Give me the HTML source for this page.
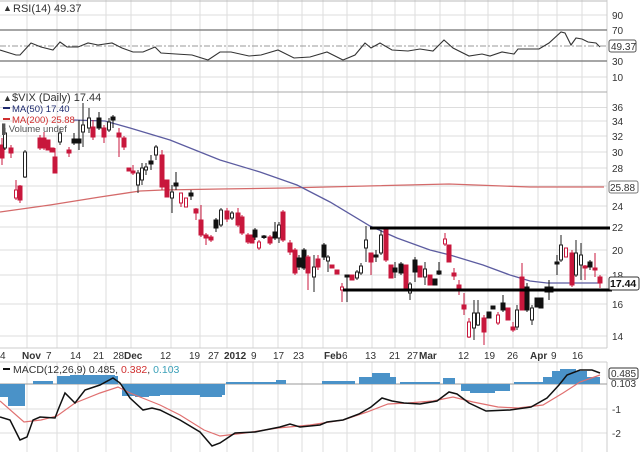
<!DOCTYPE html>
<html><head><meta charset="utf-8"><style>
html,body{margin:0;padding:0;background:#fff;}
svg{display:block;font-family:"Liberation Sans",sans-serif;}
.g{stroke:#ddd;stroke-width:1}
.r{fill:#c8173c;stroke:#c8173c}
.k{fill:#111;stroke:#111}
.w{fill:#fff;stroke:#222}
.p{fill:#fff;stroke:#c8173c}
.wk{stroke-width:1}
.lb{font-size:10px;fill:#333}
</style></head><body>
<svg width="640" height="454" viewBox="0 0 640 454" xmlns="http://www.w3.org/2000/svg">
<rect width="640" height="454" fill="#fff"/>
<g class="g">
<path d="M27 0V348M57 0V348M78 0V348M106 0V348M131 0V348M171 0V348M200 0V348M227 0V348M253 0V348M278 0V348M302 0V348M323 0V348M347 0V348M372 0V348M395 0V348M415 0V348M440 0V348M465 0V348M488 0V348M513 0V348M538 0V348M557 0V348M582 0V348"/>
<path d="M27 362V452M57 362V452M78 362V452M106 362V452M131 362V452M171 362V452M200 362V452M227 362V452M253 362V452M278 362V452M302 362V452M323 362V452M347 362V452M372 362V452M395 362V452M415 362V452M440 362V452M465 362V452M488 362V452M513 362V452M538 362V452M557 362V452M582 362V452"/>
<path d="M0 15H607M0 77H607"/>
<path d="M0 107.5H607M0 121H607M0 136H607M0 152H607M0 168H607M0 186H607M0 206H607M0 227H607M0 250H607M0 275H607M0 304H607M0 336H607"/>
<path d="M0 409H607M0 433H607"/>
</g>
<path d="M0 1H607" stroke="#bbb"/>
<path d="M607 0V348M607 362V452" stroke="#ccc"/>
<path d="M0 30H607M0 61H607" stroke="#888" stroke-width="1.5"/>
<path d="M0 46H607" stroke="#999" stroke-dasharray="6,2,2,2"/>
<path d="M0 92H607" stroke="#aaa"/>
<path d="M0 348H607M0 362H607" stroke="#ccc"/>
<polyline fill="none" stroke="#333" stroke-width="1.1" points="0,50 16,55 20,55 31,43 41,47 53,50 60,42 67,47 78,47 88,43 98,45 112,43 122,48 133,52 143,52 155,47 161,53 176,54 192,55 208,60 220,52 231,52 249,56 261,55 278,50 294,58 310,57 327,52 343,60 355,55 365,43 371,48 380,43 392,50 408,51 420,49 433,51 444,40 453,48 469,56 482,54 490,56 502,52 514,54 518,49 539,49 549,43 561,32 565,33 571,45 576,38 582,39 588,42 596,43 600,47"/>
<text x="3" y="11" style="font-size:9px" fill="#333">&#9650;</text>
<text x="13" y="12" class="lb" style="font-size:11px">RSI(14) 49.37</text>
<text x="612" y="19" class="lb">90</text><text x="612" y="34" class="lb">70</text><text x="612" y="65" class="lb">30</text><text x="612" y="81" class="lb">10</text>
<rect x="609" y="40" width="27" height="12" rx="2" fill="#fff" stroke="#555"/><text x="611" y="50" class="lb">49.37</text>
<polyline fill="none" stroke="#d46a6a" stroke-width="1.3" points="0,212 50,205 100,197 140,191 163,190 220,189 286,188 367,186 449,184 530,187 604,187"/>
<polyline fill="none" stroke="#5c5ca0" stroke-width="1.3" points="73,120 105,121 130,128 170,140 220,160 260,172 297,185 330,202 370,226 397,238 430,250 450,255 483,265 510,275 530,281 547,283 600,283"/>
<g class="wk">
<path class="r" d="M2 138V165"/><rect class="r" x="0" y="145" width="4" height="13"/>
<path class="w" d="M5 128V150"/><rect class="w" x="3.5" y="133" width="3" height="15"/>
<path class="r" d="M11 145V158"/><rect class="r" x="9" y="148" width="4" height="5"/>
<path class="p" d="M16 180V200"/><rect class="p" x="14.5" y="190" width="3" height="8"/>
<path class="r" d="M20 185V203"/><rect class="r" x="18" y="186" width="4" height="14"/>
<path class="w" d="M25 150V178"/><rect class="w" x="23.5" y="152" width="3" height="25"/>
<path class="r" d="M40 135V150"/><rect class="r" x="38" y="138" width="4" height="10"/>
<path class="r" d="M44 132V150"/><rect class="r" x="42" y="138" width="4" height="10"/>
<rect class="r" x="46" y="140" width="4" height="10"/>
<rect class="r" x="50" y="148" width="4" height="4"/>
<path class="r" d="M55 148V173"/><rect class="r" x="53" y="157" width="4" height="16"/>
<path class="w" d="M60 128V145"/><rect class="w" x="58.5" y="133" width="3" height="9"/>
<path class="r" d="M69 147V157"/><rect class="r" x="67" y="150" width="4" height="3"/>
<path class="k" d="M74 133V145"/><rect class="k" x="72" y="139" width="4" height="4"/>
<path class="k" d="M79 120V150"/><rect class="k" x="77" y="139" width="4" height="4"/>
<path class="w" d="M83 103V147"/><rect class="w" x="81.5" y="125" width="3" height="7"/>
<path class="w" d="M89 108V133"/><rect class="w" x="87.5" y="118" width="3" height="10"/>
<path class="r" d="M93 120V140"/><rect class="r" x="91" y="127" width="4" height="10"/>
<path class="k" d="M99 112V130"/><rect class="k" x="97" y="118" width="4" height="10"/>
<path class="r" d="M104 125V143"/><rect class="r" x="102" y="128" width="4" height="9"/>
<path class="w" d="M109 118V132"/><rect class="w" x="107.5" y="122" width="3" height="8"/>
<path class="k" d="M113 115V128"/><rect class="k" x="111" y="117" width="4" height="3"/>
<path class="r" d="M119 128V157"/><rect class="r" x="117" y="133" width="4" height="4"/>
<path class="r" d="M124 136V150"/><rect class="r" x="122" y="138" width="4" height="9"/>
<rect class="r" x="127" y="168" width="4" height="3"/>
<path class="r" d="M133 165V175"/><rect class="r" x="131" y="171" width="4" height="2"/>
<path class="w" d="M138 170V193"/><rect class="w" x="136.5" y="173" width="3" height="12"/>
<path class="w" d="M142 163V185"/><rect class="w" x="140.5" y="168" width="3" height="12"/>
<path class="w" d="M146 163V175"/><rect class="w" x="144.5" y="167" width="3" height="3"/>
<path class="k" d="M151 155V170"/><rect class="k" x="149" y="161" width="4" height="3"/>
<path class="w" d="M156 145V160"/><rect class="w" x="154.5" y="147" width="3" height="8"/>
<path class="r" d="M162 150V190"/><rect class="r" x="160" y="155" width="4" height="32"/>
<rect class="r" x="165" y="180" width="4" height="17"/>
<path class="w" d="M172 185V213"/><rect class="w" x="170.5" y="192" width="3" height="6"/>
<path class="k" d="M176 172V190"/><rect class="k" x="174" y="183" width="4" height="3"/>
<path class="p" d="M181 193V207"/><rect class="p" x="179.5" y="193" width="3" height="10"/>
<rect class="p" x="184.5" y="198" width="3" height="9"/>
<path class="k" d="M191 190V200"/><rect class="k" x="189" y="193" width="4" height="3"/>
<path class="r" d="M196 208V220"/><rect class="r" x="194" y="209" width="4" height="4"/>
<path class="r" d="M201 205V237"/><rect class="r" x="199" y="220" width="4" height="15"/>
<path class="r" d="M206 233V245"/><rect class="r" x="204" y="235" width="4" height="3"/>
<path class="r" d="M211 235V242"/><rect class="r" x="209" y="237" width="4" height="3"/>
<path class="k" d="M216 218V232"/><rect class="k" x="214" y="220" width="4" height="8"/>
<path class="w" d="M221 208V227"/><rect class="w" x="219.5" y="210" width="3" height="15"/>
<path class="r" d="M227 208V222"/><rect class="r" x="225" y="211" width="4" height="8"/>
<path class="w" d="M232 211V220"/><rect class="w" x="230.5" y="213" width="3" height="5"/>
<path class="r" d="M238 208V227"/><rect class="r" x="236" y="213" width="4" height="12"/>
<path class="r" d="M242 215V235"/><rect class="r" x="240" y="217" width="4" height="16"/>
<path class="r" d="M248 233V244"/><rect class="r" x="246" y="235" width="4" height="7"/>
<rect class="r" x="250" y="235" width="4" height="8"/>
<path class="k" d="M255 228V240"/><rect class="k" x="253" y="230" width="4" height="7"/>
<path class="p" d="M259 240V250"/><rect class="p" x="257.5" y="242" width="3" height="6"/>
<path class="k" d="M264 235V239"/><rect class="k" x="262" y="236" width="4" height="1.5"/>
<path class="r" d="M270 235V245"/><rect class="r" x="268" y="237" width="4" height="6"/>
<path class="k" d="M275 222V240"/><rect class="k" x="273" y="232" width="4" height="6"/>
<path class="w" d="M279 222V243"/><rect class="w" x="277.5" y="225" width="3" height="13"/>
<path class="r" d="M283 210V242"/><rect class="r" x="281" y="212" width="4" height="28"/>
<path class="r" d="M290 240V255"/><rect class="r" x="288" y="243" width="4" height="9"/>
<path class="r" d="M295 248V275"/><rect class="r" x="293" y="250" width="4" height="23"/>
<path class="k" d="M299 255V270"/><rect class="k" x="297" y="258" width="4" height="9"/>
<path class="k" d="M304 248V270"/><rect class="k" x="302" y="250" width="4" height="18"/>
<path class="r" d="M308 255V290"/><rect class="r" x="306" y="257" width="4" height="16"/>
<path class="w" d="M314 255V292"/><rect class="w" x="312.5" y="267" width="3" height="10"/>
<path class="r" d="M318 255V270"/><rect class="r" x="316" y="259" width="4" height="8"/>
<path class="k" d="M324 243V260"/><rect class="k" x="322" y="245" width="4" height="12"/>
<path class="w" d="M328 255V272"/><rect class="w" x="326.5" y="257" width="3" height="4"/>
<rect class="r" x="330" y="265" width="4" height="3"/>
<rect class="r" x="335" y="270" width="4" height="4"/>
<path class="p" d="M342 283V302"/><rect class="p" x="340.5" y="287" width="3" height="3"/>
<path class="k" d="M347 275V302"/><rect class="k" x="345" y="275" width="4" height="2"/>
<rect class="r" x="350" y="275" width="4" height="5"/>
<path class="w" d="M357 270V280"/><rect class="w" x="355.5" y="272" width="3" height="6"/>
<path class="w" d="M361 263V275"/><rect class="w" x="359.5" y="266" width="3" height="7"/>
<path class="w" d="M366 226V262"/><rect class="w" x="364.5" y="240" width="3" height="8"/>
<path class="r" d="M371 253V275"/><rect class="r" x="369" y="253" width="4" height="9"/>
<path class="k" d="M376 250V262"/><rect class="k" x="374" y="255" width="4" height="2"/>
<path class="w" d="M381 230V255"/><rect class="w" x="379.5" y="235" width="3" height="18"/>
<path class="r" d="M386 227V262"/><rect class="r" x="384" y="230" width="4" height="30"/>
<rect class="r" x="389" y="265" width="4" height="13"/>
<path class="k" d="M395 262V278"/><rect class="k" x="393" y="268" width="4" height="4"/>
<path class="k" d="M401 262V275"/><rect class="k" x="399" y="264" width="4" height="9"/>
<rect class="r" x="404" y="265" width="4" height="25"/>
<path class="w" d="M410 282V300"/><rect class="w" x="408.5" y="284" width="3" height="9"/>
<path class="k" d="M415 257V282"/><rect class="k" x="413" y="260" width="4" height="12"/>
<rect class="r" x="418" y="266" width="4" height="11"/>
<path class="w" d="M425 262V285"/><rect class="w" x="423.5" y="269" width="3" height="8"/>
<rect class="r" x="428" y="275" width="4" height="10"/>
<rect class="k" x="433" y="279" width="4" height="6"/>
<path class="k" d="M439 262V275"/><rect class="k" x="437" y="271" width="4" height="3"/>
<path class="p" d="M445 233V246"/><rect class="p" x="443.5" y="239" width="3" height="5"/>
<rect class="r" x="447" y="245" width="4" height="17"/>
<path class="r" d="M454 268V280"/><rect class="r" x="452" y="273" width="4" height="3"/>
<path class="r" d="M459 280V295"/><rect class="r" x="457" y="285" width="4" height="4"/>
<path class="r" d="M464 293V315"/><rect class="r" x="462" y="305" width="4" height="4"/>
<path class="p" d="M469 318V338"/><rect class="p" x="467.5" y="322" width="3" height="15"/>
<path class="w" d="M474 300V340"/><rect class="w" x="472.5" y="313" width="3" height="15"/>
<path class="w" d="M478 300V326"/><rect class="w" x="476.5" y="313" width="3" height="12"/>
<path class="r" d="M484 315V345"/><rect class="r" x="482" y="318" width="4" height="14"/>
<rect class="k" x="487" y="312" width="4" height="6"/>
<rect class="k" x="491" y="306" width="4" height="3"/>
<path class="p" d="M498 312V325"/><rect class="p" x="496.5" y="315" width="3" height="8"/>
<path class="k" d="M503 295V312"/><rect class="k" x="501" y="303" width="4" height="7"/>
<rect class="r" x="506" y="308" width="4" height="12"/>
<path class="p" d="M513 322V332"/><rect class="r" x="511" y="327" width="4" height="3"/>
<path class="w" d="M517 305V330"/><rect class="w" x="515.5" y="310" width="3" height="17"/>
<path class="r" d="M522 263V310"/><rect class="r" x="520" y="277" width="4" height="33"/>
<path class="k" d="M527 283V312"/><rect class="k" x="525" y="287" width="4" height="23"/>
<path class="w" d="M532 305V325"/><rect class="w" x="530.5" y="308" width="3" height="12"/>
<rect class="k" x="535" y="298" width="4" height="9"/>
<rect class="k" x="539" y="298" width="4" height="10"/>
<path class="k" d="M549 280V300"/><rect class="k" x="545" y="287" width="8" height="5"/>
<path class="k" d="M557 255V275"/><rect class="k" x="555" y="262" width="4" height="2"/>
<path class="w" d="M561 235V262"/><rect class="w" x="559.5" y="245" width="3" height="15"/>
<rect class="p" x="564.5" y="248" width="3" height="9"/>
<path class="r" d="M572 250V287"/><rect class="r" x="570" y="253" width="4" height="32"/>
<path class="w" d="M576 240V277"/><rect class="w" x="574.5" y="253" width="3" height="22"/>
<path class="w" d="M581 243V280"/><rect class="w" x="579.5" y="255" width="3" height="10"/>
<path class="r" d="M585 265V280"/><rect class="r" x="583" y="266" width="4" height="2"/>
<path class="k" d="M590 260V270"/><rect class="k" x="588" y="262" width="4" height="5"/>
<path class="r" d="M595 253V277"/><rect class="r" x="593" y="268" width="4" height="2"/>
<path class="r" d="M600 275V288"/><rect class="r" x="598" y="277" width="4" height="6"/>
</g>
<path d="M370 228H610" stroke="#000" stroke-width="3"/>
<path d="M343 290H612" stroke="#000" stroke-width="3"/>
<text x="3" y="101" style="font-size:9px" fill="#333">&#9650;</text>
<text x="12" y="101" class="lb" style="font-size:11px">$VIX (Daily) 17.44</text>
<path d="M3 108H10" stroke="#1e2a6e" stroke-width="2"/><text x="12" y="112" style="font-size:9.5px" fill="#1e2a6e">MA(50) 17.40</text>
<path d="M3 119H10" stroke="#d03030" stroke-width="2"/><text x="12" y="123" style="font-size:9.5px" fill="#d03030">MA(200) 25.88</text>
<text x="2" y="132" style="font-size:9.5px" fill="#555">&#9612;Volume undef</text>
<text x="612" y="111" class="lb">36</text><text x="612" y="125" class="lb">34</text><text x="612" y="140" class="lb">32</text>
<text x="612" y="156" class="lb">30</text><text x="612" y="172" class="lb">28</text><text x="612" y="210" class="lb">24</text>
<text x="612" y="231" class="lb">22</text><text x="612" y="254" class="lb">20</text><text x="612" y="279" class="lb">18</text>
<text x="612" y="308" class="lb">16</text><text x="612" y="340" class="lb">14</text>
<rect x="609" y="181" width="29" height="12" rx="2" fill="#fff" stroke="#777"/><text x="610" y="191" class="lb">25.88</text>
<rect x="609" y="277" width="30" height="13" rx="2" fill="#fff" stroke="#333"/><text x="610" y="287" style="font-size:10.5px;font-weight:bold" fill="#111">17.44</text>
<g style="font-size:10px" fill="#333">
<text x="0" y="359">4</text><text x="22" y="359" font-weight="bold">Nov</text><text x="46" y="359">7</text><text x="70" y="359">14</text><text x="93" y="359">21</text>
<text x="113" y="359">28</text><text x="124" y="359" font-weight="bold">Dec</text><text x="160" y="359">12</text><text x="189" y="359">19</text><text x="208" y="359">27</text>
<text x="224" y="359" font-weight="bold">2012</text><text x="251" y="359">9</text><text x="273" y="359">17</text><text x="293" y="359">23</text>
<text x="324" y="359" font-weight="bold">Feb</text><text x="342" y="359">6</text><text x="365" y="359">13</text><text x="389" y="359">21</text><text x="407" y="359">27</text>
<text x="419" y="359" font-weight="bold">Mar</text><text x="458" y="359">12</text><text x="484" y="359">19</text><text x="507" y="359">26</text>
<text x="530" y="359" font-weight="bold">Apr</text><text x="551" y="359">9</text><text x="572" y="359">16</text>
</g>
<path d="M0 384H607" stroke="#999"/>
<g fill="#4a92c8">
<rect x="0" y="384" width="25" height="13"/><rect x="8" y="384" width="17" height="22"/>
<rect x="33" y="381" width="20" height="3"/>
<rect x="57" y="376" width="61" height="8"/><rect x="70" y="375" width="45" height="9"/>
<rect x="122" y="384" width="38" height="12"/><rect x="135" y="384" width="14" height="13"/>
<rect x="160" y="384" width="65" height="11"/><rect x="200" y="384" width="22" height="13"/>
<rect x="226" y="382" width="60" height="2"/><rect x="276" y="380" width="10" height="4"/>
<rect x="322" y="381" width="33" height="3"/>
<rect x="359" y="377" width="37" height="7"/><rect x="372" y="373" width="18" height="11"/>
<rect x="400" y="382" width="40" height="2"/><rect x="443" y="378" width="12" height="6"/>
<rect x="461" y="384" width="49" height="7"/><rect x="470" y="384" width="25" height="9"/>
<rect x="514" y="382" width="29" height="2"/>
<rect x="543" y="377" width="57" height="7"/><rect x="552" y="371" width="35" height="13"/><rect x="560" y="369" width="16" height="15"/>
</g>
<polyline fill="none" stroke="#e07070" stroke-width="1.2" points="0,401 24,422 41,420 57,416 75,403 100,393 118,387 130,393 160,405 180,415 204,430 220,436 245,433 278,428 310,425 343,420 367,412 388,404 408,403 433,401 453,397 473,402 498,407 518,408 543,405 563,393 580,382 600,375"/>
<polyline fill="none" stroke="#111" stroke-width="1.5" points="0,417 10,420 20,440 27,437 33,420 40,417 55,418 58,410 65,393 75,403 85,390 100,385 113,378 120,383 130,398 143,410 152,408 160,410 180,420 200,432 212,446 220,443 235,433 255,432 280,427 290,424 300,427 320,425 327,422 343,420 359,414 371,407 382,398 392,401 404,403 420,404 437,401 449,392 457,394 469,403 486,411 510,410 531,407 547,398 559,385 567,375 580,370 592,370 600,373"/>
<path d="M3 369H10" stroke="#111" stroke-width="2"/>
<text x="13" y="373" style="font-size:10.5px" fill="#333">MACD(12,26,9) 0.485, <tspan fill="#d03030">0.382</tspan>, <tspan fill="#3aa0b8">0.103</tspan></text>
<text x="612" y="413" class="lb">-1</text><text x="612" y="437" class="lb">-2</text>
<rect x="609" y="368" width="29" height="11" rx="2" fill="#fff" stroke="#333"/><text x="611" y="377" class="lb">0.485</text>
<text x="611" y="387" class="lb" fill="#3aa0b8">0.103</text>
</svg>
</body></html>
